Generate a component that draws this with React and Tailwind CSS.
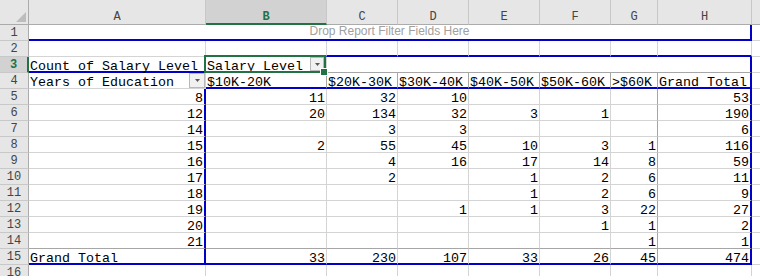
import React from 'react';

const MONO = "font-['Liberation_Mono',monospace]";

const RG = "border-r border-r-[#d4d4d4]";
const RD = "border-r border-r-[#a6a6a6]";
const RB = "border-r-2 border-r-[#0000c8]";
const BG = "border-b border-b-[#d4d4d4]";
const BD = "border-b border-b-[#a6a6a6]";
const BB = "border-b-2 border-b-[#0000c8]";

function C({ r = RG, b = BG, right = false, children }) {
  return (
    <div
      className={`h-4 pt-[2px] leading-[15px] text-[13.33px] whitespace-nowrap text-black ${MONO} ${r} ${b} ${
        right ? 'text-right pr-[1px]' : 'pl-[1px]'
      }`}
    >
      {children}
    </div>
  );
}

function I() {
  return <div className={`h-4 ${BG}`} />;
}

function RH({ n, sel = false }) {
  return (
    <div
      className={`h-4 pt-[1px] leading-[15px] text-center text-[12px] ${MONO} border-b border-b-[#c8c8c8] ${
        sel
          ? 'bg-[#d2d2d2] text-[#217346] font-bold border-r-2 border-r-[#217346]'
          : 'bg-[#e6e6e6] text-[#444444] border-r border-r-[#ababab]'
      }`}
    >
      {n}
    </div>
  );
}

function CH({ l, sel = false }) {
  return (
    <div
      className={`h-[25px] pt-[10px] leading-[15px] text-center text-[12px] ${MONO} border-r border-r-[#c8c8c8] ${
        sel
          ? 'bg-[#d2d2d2] text-[#217346] font-bold border-b-2 border-b-[#217346]'
          : 'bg-[#e6e6e6] text-[#444444] border-b border-b-[#ababab]'
      }`}
    >
      {l}
    </div>
  );
}

function DD({ className = '' }) {
  return (
    <div className={`flex items-center justify-center bg-[#f1f1f1] border border-[#b8b8b8] shrink-0 ${className}`}>
      <svg width="5" height="3" viewBox="0 0 5 3">
        <path d="M0 0H5L2.5 3Z" fill="#5a5a5a" />
      </svg>
    </div>
  );
}

const data = [
  [5, '8', '11', '32', '10', '', '', '', '53'],
  [6, '12', '20', '134', '32', '3', '1', '', '190'],
  [7, '14', '', '3', '3', '', '', '', '6'],
  [8, '15', '2', '55', '45', '10', '3', '1', '116'],
  [9, '16', '', '4', '16', '17', '14', '8', '59'],
  [10, '17', '', '2', '', '1', '2', '6', '11'],
  [11, '18', '', '', '', '1', '2', '6', '9'],
  [12, '19', '', '', '1', '1', '3', '22', '27'],
  [13, '20', '', '', '', '', '1', '1', '2'],
  [14, '21', '', '', '', '', '', '1', '1'],
];

const heads = ['$10K-20K', '$20K-30K', '$30K-40K', '$40K-50K', '$50K-60K', '>$60K'];
const totals = ['33', '230', '107', '33', '26', '45'];

export default function App() {
  return (
    <div className="w-[760px] h-[276px] overflow-hidden bg-white">
      <div className="grid grid-cols-[29px_177px_121px_71px_71px_71px_71px_47px_94px_8px]">
        {/* header row */}
        <div className="h-[25px] flex items-end justify-end bg-[#e6e6e6] border-r border-r-[#ababab] border-b border-b-[#ababab] pr-[2px] pb-[2px]">
          <svg width="10" height="10" viewBox="0 0 10 10">
            <path d="M10 0V10H0Z" fill="#bdbdbd" />
          </svg>
        </div>
        <CH l="A" />
        <CH l="B" sel />
        <CH l="C" />
        <CH l="D" />
        <CH l="E" />
        <CH l="F" />
        <CH l="G" />
        <CH l="H" />
        <div className="h-[25px] bg-[#e6e6e6] border-b border-b-[#ababab]" />

        {/* row 1 */}
        <RH n={1} />
        <div className={`col-span-8 h-4 text-center text-[12px] leading-[13px] text-[#a0a0a0] font-['Liberation_Sans',Arial,sans-serif] ${RB} ${BB}`}>
          Drop Report Filter Fields Here
        </div>
        <I />

        {/* row 2 */}
        <RH n={2} />
        <C />
        <C b={BB} />
        <C b={BB} />
        <C b={BB} />
        <C b={BB} />
        <C b={BB} />
        <C b={BB} />
        <C b={BB} />
        <I />

        {/* row 3 */}
        <RH n={3} sel />
        <C b={BB}>Count of Salary Level</C>
        <div className={`relative z-10 h-4 flex justify-between text-[13.33px] leading-[15px] whitespace-nowrap text-black ${MONO} ${RG} ${BD}`}>
          <span className="pt-[2px] pl-[1px]">Salary Level</span>
          <DD className="w-[14px] h-[14px] mr-[2px]" />
          <div className="absolute -left-[2px] -top-[2px] right-0 -bottom-[1px] border-2 border-[#217346] pointer-events-none" />
          <div className="absolute -right-[1px] -bottom-[3px] w-[6px] h-[6px] bg-[#217346] outline outline-1 outline-white" />
        </div>
        <div className={`col-span-6 h-4 ${RB} ${BD}`} />
        <I />

        {/* row 4 */}
        <RH n={4} />
        <div className={`h-4 flex justify-between text-[13.33px] leading-[15px] whitespace-nowrap text-black ${MONO} ${RG} ${BG}`}>
          <span className="pt-[2px] pl-[1px]">Years of Education</span>
          <DD className="w-[16px] h-[15px]" />
        </div>
        {heads.map((h) => (
          <C key={h} r={RD} b={BB}>
            {h}
          </C>
        ))}
        <C r={RB} b={BB}>
          Grand Total
        </C>
        <I />

        {/* rows 5-14 */}
        {data.map((row) => {
          const [n, a, b, c, d, e, f, g, h] = row;
          const bb = n === 14 ? BD : BG;
          return (
            <React.Fragment key={n}>
              <RH n={n} />
              <C r={RB} b={bb} right>
                {a}
              </C>
              <C r={RG} b={bb} right>
                {b}
              </C>
              <C r={RG} b={bb} right>
                {c}
              </C>
              <C r={RG} b={bb} right>
                {d}
              </C>
              <C r={RG} b={bb} right>
                {e}
              </C>
              <C r={RG} b={bb} right>
                {f}
              </C>
              <C r={RD} b={bb} right>
                {g}
              </C>
              <C r={RB} b={bb} right>
                {h}
              </C>
              <I />
            </React.Fragment>
          );
        })}

        {/* row 15 */}
        <RH n={15} />
        <C r={RB} b={BB}>
          Grand Total
        </C>
        {totals.map((t, i) => (
          <C key={i} r={i === 5 ? RD : RG} b={BB} right>
            {t}
          </C>
        ))}
        <C r={RB} b={BB} right>
          474
        </C>
        <I />

        {/* row 16 */}
        <RH n={16} />
        <C />
        <C />
        <C />
        <C />
        <C />
        <C />
        <C />
        <C />
        <I />
      </div>
    </div>
  );
}
